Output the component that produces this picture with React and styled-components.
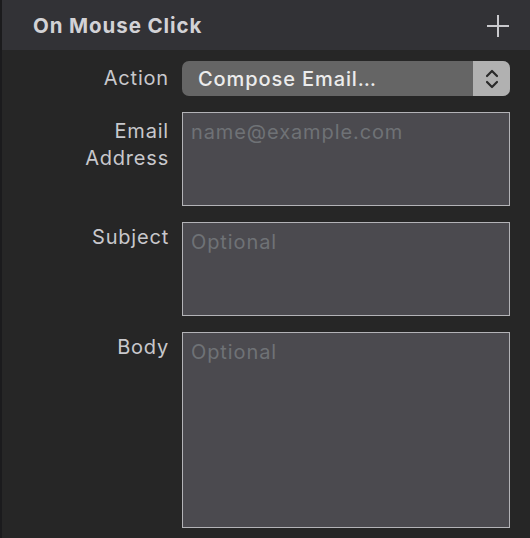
import React from "react";
import styled, { createGlobalStyle } from "styled-components";

const Global = createGlobalStyle`
  html, body { margin: 0; padding: 0; background: #262626; }
  body { font-family: Inter, "Noto Sans", "Liberation Sans", sans-serif; }
`;

const Panel = styled.div`
  width: 530px;
  height: 538px;
  box-sizing: border-box;
  border-left: 2px solid #1b1b1d;
  background: #262626;
  display: flex;
  flex-direction: column;
  overflow: hidden;
`;

const Header = styled.div`
  height: 50px;
  flex: none;
  background: #323236;
  display: flex;
  align-items: center;
  justify-content: space-between;
  padding: 1px 20px 0 31px;
  box-sizing: border-box;
`;

const Title = styled.div`
  color: #d2d2d6;
  font-size: 20.5px;
  font-weight: 700;
  letter-spacing: 0.9px;
`;

const PlusButton = styled.button`
  width: 24px;
  height: 24px;
  padding: 0;
  border: 0;
  background: none;
  display: flex;
  align-items: center;
  justify-content: center;
`;

const Form = styled.div`
  display: grid;
  grid-template-columns: 167px 328px;
  column-gap: 13px;
  row-gap: 16px;
  padding: 11px 0 0 0;
`;

const Label = styled.div`
  color: #c8c8cc;
  font-size: 20px;
  letter-spacing: 0.8px;
  line-height: 27px;
  text-align: right;
  padding-top: ${(p) => p.$top || 0}px;
`;

const Select = styled.div`
  height: 35px;
  border-radius: 7px;
  background: #656565;
  display: flex;
  overflow: hidden;
`;

const SelectValue = styled.div`
  flex: 1;
  color: #ececec;
  font-size: 20px;
  font-weight: 500;
  letter-spacing: 0.9px;
  display: flex;
  align-items: center;
  padding-left: 16px;
`;

const Stepper = styled.div`
  width: 37px;
  background: #b1b1b1;
  display: flex;
  align-items: center;
  justify-content: center;
`;

const Field = styled.div`
  box-sizing: border-box;
  height: ${(p) => p.$h}px;
  border: 1px solid #b3b3b7;
  background: #4b4a4f;
  color: #6f7276;
  font-size: 20px;
  letter-spacing: 0.9px;
  padding: 6px 8px;
  line-height: 27px;
`;

export default function App() {
  return (
    <>
      <Global />
      <Panel>
        <Header>
          <Title>On Mouse Click</Title>
          <PlusButton aria-label="Add">
            <svg width="24" height="24" viewBox="0 0 24 24">
              <path d="M12 1v22M1 12h22" stroke="#c9c9cd" strokeWidth="2" />
            </svg>
          </PlusButton>
        </Header>
        <Form>
          <Label $top={4}>Action</Label>
          <Select>
            <SelectValue>Compose Email…</SelectValue>
            <Stepper>
              <svg width="16" height="24" viewBox="0 0 16 24">
                <path d="M3 9l5-5 5 5M3 15l5 5 5-5" fill="none" stroke="#2a2a2a" strokeWidth="2.2" strokeLinecap="round" strokeLinejoin="round" />
              </svg>
            </Stepper>
          </Select>
          <Label $top={6}>Email<br />Address</Label>
          <Field $h={94}>name@example.com</Field>
          <Label $top={2}>Subject</Label>
          <Field $h={94}>Optional</Field>
          <Label $top={2}>Body</Label>
          <Field $h={196}>Optional</Field>
        </Form>
      </Panel>
    </>
  );
}
